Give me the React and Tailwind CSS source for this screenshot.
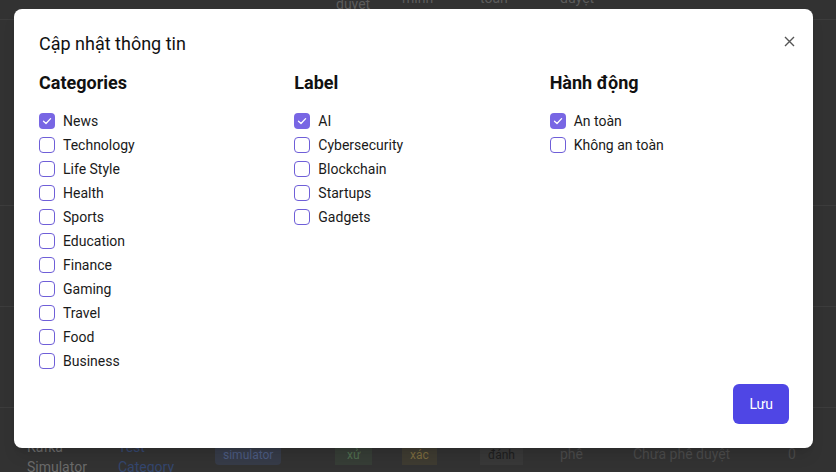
import React, { useState } from 'react';

const categories = ['News', 'Technology', 'Life Style', 'Health', 'Sports', 'Education', 'Finance', 'Gaming', 'Travel', 'Food', 'Business'];
const labels = ['AI', 'Cybersecurity', 'Blockchain', 'Startups', 'Gadgets'];
const actions = ['An toàn', 'Không an toàn'];

const Check = ({ checked, label, onToggle }) => (
    <label className="flex items-center gap-2 h-6 cursor-pointer select-none" onClick={onToggle}>
        <span
            className={
                checked
                    ? 'w-4 h-4 rounded-[4px] bg-[#7866e4] flex items-center justify-center'
                    : 'w-4 h-4 rounded-[4px] border border-[#6f5fd8] bg-white'
            }
        >
            {checked && (
                <svg width="10" height="10" viewBox="0 0 10 10" fill="none">
                    <path d="M1.5 5.2 L4 7.5 L8.6 2.6" stroke="white" strokeWidth="1.3" strokeLinecap="round" strokeLinejoin="round" />
                </svg>
            )}
        </span>
        <span className="text-sm text-[#1a1a1a]">{label}</span>
    </label>
);

const Group = ({ title, items, selected, setSelected }) => (
    <div>
        <h3 className="text-lg font-bold leading-6 text-[#111]">{title}</h3>
        <div className="mt-[14px] flex flex-col">
            {items.map((item) => (
                <Check
                    key={item}
                    label={item}
                    checked={selected.includes(item)}
                    onToggle={() =>
                        setSelected(selected.includes(item) ? selected.filter((s) => s !== item) : [...selected, item])
                    }
                />
            ))}
        </div>
    </div>
);

const App = () => {
    const [cats, setCats] = useState(['News']);
    const [labs, setLabs] = useState(['AI']);
    const [acts, setActs] = useState(['An toàn']);

    return (
        <div className="relative w-[836px] h-[472px] overflow-hidden bg-[#323232] text-sm" style={{ fontFamily: 'Roboto, sans-serif' }}>
            {/* table behind the overlay */}
            <div className="flex flex-col text-[#5c5c5c]">
                <div className="h-[20px] border-b border-[#3c3c3c] flex pl-[336px] leading-5 overflow-hidden">
                    <span className="w-[66px] -mt-[6px]">duyệt</span>
                    <span className="w-[78px] -mt-[12px]">minh</span>
                    <span className="w-[80px] -mt-[12px]">toàn</span>
                    <span className="-mt-[12px]">duyệt</span>
                </div>
                <div className="h-[186px] border-b border-[#3c3c3c]" />
                <div className="h-[101px] border-b border-[#3c3c3c]" />
                <div className="h-[101px] border-b border-[#3c3c3c]" />
                <div className="flex pl-[27px] pt-[29px] leading-5">
                    <div className="w-[91px] text-[#6a6a6a]">
                        <div>Kafka</div>
                        <div>Simulator</div>
                    </div>
                    <div className="w-[97px] text-[#34466e]">
                        <div>Test</div>
                        <div>Category</div>
                    </div>
                    <div className="w-[120px] pt-[7px]">
                        <span className="px-2 rounded bg-[#363b48] text-[#4b5a80] text-xs leading-5 inline-block">simulator</span>
                    </div>
                    <div className="w-[67px] pt-[7px]">
                        <span className="px-3 bg-[#363d36] text-[#4f6d4f] text-xs leading-5 inline-block">xử</span>
                    </div>
                    <div className="w-[78px] pt-[7px]">
                        <span className="px-2 bg-[#3e3b31] text-[#7a6a3f] text-xs leading-5 inline-block">xác</span>
                    </div>
                    <div className="w-[80px] pt-[7px]">
                        <span className="px-2 bg-[#383838] text-[#1e1e1e] text-xs leading-5 inline-block">đánh</span>
                    </div>
                    <div className="w-[73px] pt-[7px] text-[#4a4a4a]">phê</div>
                    <div className="w-[155px] pt-[7px] text-[#4a4a4a]">Chưa phê duyệt</div>
                    <div className="pt-[7px] text-[#4a4a4a]">0</div>
                </div>
            </div>

            {/* modal */}
            <div className="absolute left-[14px] top-[9px] w-[799px] h-[439px] rounded-lg bg-white shadow-lg pl-[25px] pr-6 pt-6 pb-6 flex flex-col">
                <button className="absolute right-[18px] top-[27px] text-[#555]">
                    <svg width="11" height="11" viewBox="0 0 11 11">
                        <path d="M1 1 L10 10 M10 1 L1 10" stroke="currentColor" strokeWidth="1.4" />
                    </svg>
                </button>
                <h2 className="text-lg leading-[22px] text-[#111]">Cập nhật thông tin</h2>
                <div className="mt-4 grid grid-cols-3 gap-4">
                    <Group title="Categories" items={categories} selected={cats} setSelected={setCats} />
                    <Group title="Label" items={labels} selected={labs} setSelected={setLabs} />
                    <Group title="Hành động" items={actions} selected={acts} setSelected={setActs} />
                </div>
                <div className="mt-auto flex justify-end">
                    <button className="h-10 px-4 rounded-md bg-[#4f46e5] text-white text-sm">Lưu</button>
                </div>
            </div>
        </div>
    );
};

export default App;
